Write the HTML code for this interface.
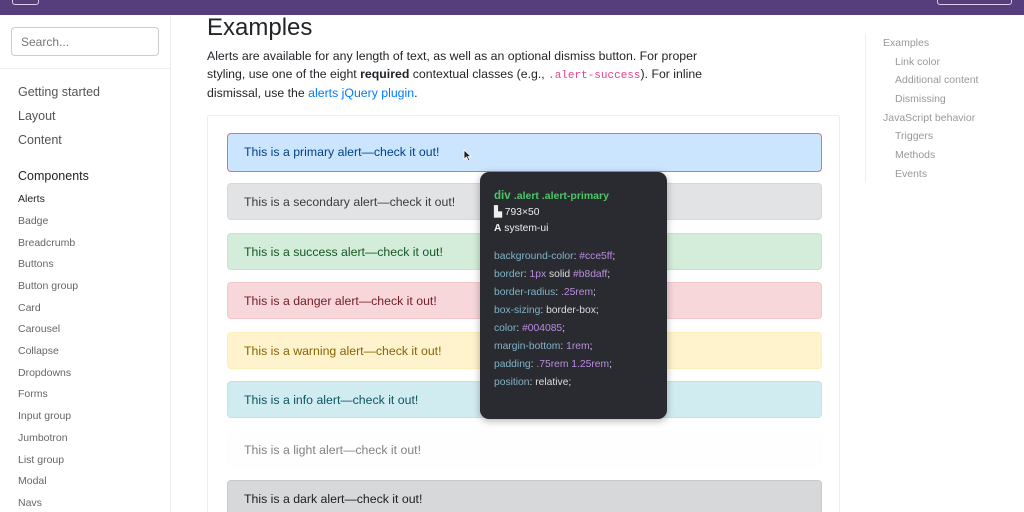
<!DOCTYPE html>
<html><head><meta charset="utf-8"><style>
*{box-sizing:border-box;margin:0;padding:0}
html,body{width:1024px;height:512px;overflow:hidden}
body{background:#fff;font-family:"Liberation Sans",sans-serif;position:relative;color:#212529}
.nav{position:absolute;left:0;top:0;width:1024px;height:15px;background:#563d7c}
.nb1{position:absolute;left:12px;top:-6px;width:27px;height:11px;border:1px solid #d8cfe6;border-radius:3px}
.nb2{position:absolute;left:937px;top:-6px;width:75px;height:11px;border:1px solid #d8cfe6;border-radius:3px}
.side{position:absolute;left:0;top:15px;width:171px;height:497px;border-right:1px solid #eee}
.search{position:absolute;left:11px;top:27px;width:148px;height:29px;border:1px solid #ccc;border-radius:4px;font-size:12px;color:#777;padding:7px 9px}
.sep{position:absolute;left:0;top:68px;width:170px;border-top:1px solid #eee}
.s{position:absolute;left:18px;color:#555;white-space:nowrap}
.big{font-size:12.5px}.sm{font-size:10.5px;color:#666}
h2{position:absolute;left:207px;top:14px;font-size:24px;font-weight:400;color:#212529}
.p{position:absolute;left:207px;top:47px;width:500px;font-size:12.3px;line-height:18.3px;color:#212529}
code{font-family:"Liberation Mono",monospace;color:#e83e8c;font-size:11px;line-height:10px}
a{color:#007bff;text-decoration:none}
.box{position:absolute;left:207px;top:115px;width:633px;height:420px;border:1px solid #eee;border-radius:3px}
.al{position:absolute;left:227px;width:595px;height:37px;border:1px solid;border-radius:4px;font-size:12.3px;padding:11px 16px 0 16px}
.tip{position:absolute;left:480px;top:172px;width:187px;height:247px;background:#2a2b31;border-radius:9px;color:#ddd;font-size:10.3px;padding:18px 14px;box-shadow:0 2px 8px rgba(0,0,0,.3)}
.tip .k{color:#7fb4c9}.tip .v{color:#b98ce0}
.toc{position:absolute;left:865px;top:33px;height:150px;border-left:1px solid #eee}
.t{position:absolute;font-size:10.5px;color:#99979c;white-space:nowrap}
</style></head><body>
<div class="nav"><div class="nb1"></div><div class="nb2"></div></div>
<div class="side"></div>
<div class="search">Search...</div>
<div class="sep"></div>
<div class="s big" style="top:85px">Getting started</div>
<div class="s big" style="top:109px">Layout</div>
<div class="s big" style="top:133px">Content</div>
<div class="s big" style="top:169px;color:#222">Components</div>
<div class="s sm" style="top:193px;color:#222">Alerts</div>
<div class="s sm" style="top:215px">Badge</div>
<div class="s sm" style="top:237px">Breadcrumb</div>
<div class="s sm" style="top:258px">Buttons</div>
<div class="s sm" style="top:280px">Button group</div>
<div class="s sm" style="top:302px">Card</div>
<div class="s sm" style="top:323px">Carousel</div>
<div class="s sm" style="top:345px">Collapse</div>
<div class="s sm" style="top:367px">Dropdowns</div>
<div class="s sm" style="top:388px">Forms</div>
<div class="s sm" style="top:410px">Input group</div>
<div class="s sm" style="top:432px">Jumbotron</div>
<div class="s sm" style="top:454px">List group</div>
<div class="s sm" style="top:475px">Modal</div>
<div class="s sm" style="top:497px">Navs</div>
<h2>Examples</h2>
<div class="p">Alerts are available for any length of text, as well as an optional dismiss button. For proper styling, use one of the eight <b>required</b> contextual classes (e.g., <code>.alert-success</code>). For inline dismissal, use the <a>alerts jQuery plugin</a>.</div>
<div class="box"></div>
<div class="al" style="top:133px;height:39px;background:#cce5ff;border-color:#e0707a;color:#004085">This is a primary alert—check it out!</div>
<div class="al" style="top:183px;background:#e2e3e5;border-color:#d6d8db;color:#383d41">This is a secondary alert—check it out!</div>
<div class="al" style="top:233px;background:#d4edda;border-color:#c3e6cb;color:#155724">This is a success alert—check it out!</div>
<div class="al" style="top:282px;background:#f8d7da;border-color:#f5c6cb;color:#721c24">This is a danger alert—check it out!</div>
<div class="al" style="top:332px;background:#fff3cd;border-color:#ffeeba;color:#856404">This is a warning alert—check it out!</div>
<div class="al" style="top:381px;background:#d1ecf1;border-color:#bee5eb;color:#0c5460">This is a info alert—check it out!</div>
<div class="al" style="top:431px;background:#fefefe;border-color:#fdfdfe;color:#818182">This is a light alert—check it out!</div>
<div class="al" style="top:480px;background:#d6d8d9;border-color:#c6c8ca;color:#1b1e21">This is a dark alert—check it out!</div>
<svg style="position:absolute;left:463px;top:149px" width="9" height="13" viewBox="0 0 9 13"><path d="M1 1L1 10L3.5 8L5.5 12L7 11.3L5 7.5L8 7.5Z" fill="#222" stroke="#fff" stroke-width=".8"/></svg>
<div class="tip">
<div style="color:#4cc765;font-weight:bold;font-size:11.5px">div <span style="font-size:10.5px">.alert .alert-primary</span></div>
<div style="margin-top:4px;color:#eee">▙ 793×50</div>
<div style="margin-top:5px;color:#eee"><b>A</b> system-ui</div>
<div style="margin-top:14px;line-height:18px">
<div><span class="k">background-color</span>: <span class="v">#cce5ff</span>;</div>
<div><span class="k">border</span>: <span class="v">1px</span> solid <span class="v">#b8daff</span>;</div>
<div><span class="k">border-radius</span>: <span class="v">.25rem</span>;</div>
<div><span class="k">box-sizing</span>: border-box;</div>
<div><span class="k">color</span>: <span class="v">#004085</span>;</div>
<div><span class="k">margin-bottom</span>: <span class="v">1rem</span>;</div>
<div><span class="k">padding</span>: <span class="v">.75rem 1.25rem</span>;</div>
<div><span class="k">position</span>: relative;</div>
</div></div>
<div class="toc"></div>
<div class="t" style="left:883px;top:37px">Examples</div>
<div class="t" style="left:895px;top:56px">Link color</div>
<div class="t" style="left:895px;top:74px">Additional content</div>
<div class="t" style="left:895px;top:93px">Dismissing</div>
<div class="t" style="left:883px;top:112px">JavaScript behavior</div>
<div class="t" style="left:895px;top:130px">Triggers</div>
<div class="t" style="left:895px;top:149px">Methods</div>
<div class="t" style="left:895px;top:168px">Events</div>
</body></html>
